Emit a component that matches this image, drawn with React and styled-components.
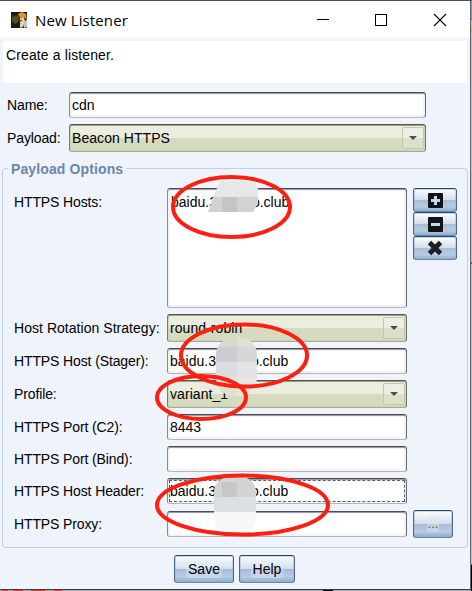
import React from "react";
import styled, { createGlobalStyle, css } from "styled-components";

const Global = createGlobalStyle`
  * { box-sizing: border-box; }
  body { margin: 0; overflow: hidden; font-family: "Liberation Sans", Arial, sans-serif; font-size: 14px; color: #000; }
`;

const Desktop = styled.div`
  position: relative;
  width: 472px;
  height: 591px;
  padding: 1px 2px 2px 0;
  background: linear-gradient(#4e5058 0 1px, #626569 1px 589px, #3b3b3e 589px 590px, #a9a9ab 590px);
`;
const DesktopSliver = styled.svg`
  position: absolute;
  left: 0;
  top: 0;
`;
const Window = styled.div`
  display: flex;
  flex-direction: column;
  width: 470px;
  height: 588px;
  background: #eff3fb;
`;
const TitleBar = styled.header`
  display: flex;
  align-items: center;
  height: 37px;
  padding-left: 11px;
  background: #fff;
`;
const Title = styled.h1`
  flex: 1;
  margin: 0 0 0 8px;
  font: 400 15px/20px "Open Sans", sans-serif;
  letter-spacing: .12px;
`;
const WindowControls = styled.div`
  display: flex;
  width: 176px;
`;
const ControlIcon = styled.svg`
  width: 58.5px;
  height: 14px;
`;
const Description = styled.p`
  height: 42px;
  margin: 3px 3px 9px;
  padding: 6px 3px;
  line-height: 16px;
  letter-spacing: .12px;
  background: #fff;
`;
const Form = styled.div`
  display: grid;
  grid-template-columns: ${(p) => p.$labels}px ${(p) => p.$fields}px auto;
  column-gap: 6px;
  row-gap: 6px;
  align-items: center;
  justify-content: start;
  padding-left: ${(p) => p.$indent}px;
`;
const Label = styled.label`
  grid-column: 1;
  align-self: ${(p) => (p.$top ? "start" : "center")};
  padding-top: ${(p) => (p.$top ? 6 : 0)}px;
  line-height: 16px;
  letter-spacing: ${(p) => (p.$wide ? 0.04 : -0.12)}px;
  white-space: nowrap;
`;
const frame = css`
  border: 1px solid #888a8c;
  border-top-color: #4c4d4e;
  border-right-color: #66686a;
  border-bottom-color: #b4b5b9;
  border-radius: 3px;
`;
const Field = styled.div`
  ${frame}
  grid-column: 2;
  display: flex;
  align-items: ${(p) => (p.$tall ? "flex-start" : "center")};
  height: ${(p) => (p.$tall ? 120 : 26)}px;
  padding: ${(p) => (p.$tall ? "5px 3px" : "0 2px")};
  line-height: 16px;
  background: #fff;
  box-shadow: inset 0 1px 0 #9b9c9d, inset 0 0 0 2px #f3f3f5;
  white-space: pre;
  ${(p) => p.$focused && css`
    outline: 1px dashed #48638c;
    outline-offset: -3px;
  `}
`;
const Combo = styled.div`
  ${frame}
  grid-column: 2;
  display: flex;
  align-items: center;
  justify-content: space-between;
  height: 28px;
  padding: 0 1px 0 2px;
  border-color: #55564c #70735f #a6ab91 #777b68;
  background: linear-gradient(#ebeddf 0 13px, #d6dbbf 13px);
  box-shadow: inset 0 1px 0 #9a9c8e, inset 0 0 0 1px #cdd2b8;
  line-height: 16px;
  letter-spacing: .06px;
`;
const Arrow = styled.span`
  display: grid;
  place-items: center;
  width: 22px;
  height: 22px;
  border: 1px solid #c4c9ad;
  border-radius: 2px;
  background: linear-gradient(#edefe5 0 10px, #dce0c9 10px);
`;
const Group = styled.fieldset`
  width: 466px;
  height: 388px;
  margin: 8px 0 0 2px;
  padding: 0;
  border: 1px solid #c0cfe1;
  border-radius: 4px;
`;
const Legend = styled.legend`
  height: 17px;
  margin-left: 5px;
  padding: 0 3px;
  font-weight: bold;
  line-height: 18px;
  letter-spacing: .12px;
  color: #6b87ab;
`;
const GroupBody = styled.div`
  padding-top: 11px;
`;
const Stack = styled.div`
  align-self: start;
`;
const Button = styled.button`
  display: flex;
  align-items: center;
  justify-content: center;
  width: ${(p) => p.$w}px;
  height: ${(p) => p.$h || 28}px;
  padding: 0;
  border: 1px solid #4a6a8d;
  border-top-color: #27486b;
  border-bottom-color: #668aad;
  border-radius: 3px;
  background: linear-gradient(#fdfefe, #d3deec 49%, #a7bdd8 51%, #b8cce2 80%, #8fadc9);
  box-shadow: inset 0 0 0 1px rgba(150, 180, 210, .5);
  font: 14px/16px "Liberation Sans", Arial, sans-serif;
  color: #000;
`;
const Ellipsis = styled.span`
  padding: 0 1px;
  font-size: 13px;
  color: #6b5a3c;
  background: rgba(222, 228, 234, .45);
`;
const Footer = styled.footer`
  display: flex;
  gap: 5px;
  padding: 7px 0 0 174px;
`;
const ButtonText = styled.span`
  padding: 1px 2px;
  border-radius: 3px;
  background: rgba(225, 235, 245, .4);
`;
const Annotations = styled.svg`
  position: absolute;
  left: 0;
  top: 0;
  pointer-events: none;
`;

function AppIcon() {
  return (
    <svg width="16" height="16" viewBox="0 0 16 16">
      <path fill="#17191a" d="M0 0h16v16H0z" />
      <path fill="#5a4a22" d="M1 3l2 2 2-2 3 2-1 5-3 2-3-3z" />
      <path fill="#e2922b" d="M7 2l4-2 4 2 1 6-3-3-4 1z" />
      <path fill="#efc9a8" d="M9 6l4-1 1 5-2 5-3 1v-5z" />
      <path fill="#935a32" d="M8 7l3 1v1l-2 1z" />
      <path fill="#b3c9cd" d="M13 9l3-1v7l-3 1z" />
    </svg>
  );
}

function SelectField({ children }) {
  return (
    <Combo>
      {children}
      <Arrow><svg width="8" height="4"><path d="M0 0h8L4 4z" fill="#4b4e48" /></svg></Arrow>
    </Combo>
  );
}

function SquareIcon({ plus }) {
  return (
    <svg width="15" height="15" viewBox="0 0 15 15">
      <rect width="15" height="15" rx="1" fill="#111416" />
      <path d={plus ? "M6 3h3v3h3v3H9v3H6V9H3V6h3z" : "M3 6h9v3H3z"} fill="#c4d8e8" />
    </svg>
  );
}

const ellipses = [
  [231.5, 207, 58.5, 30],
  [244, 355.5, 63, 31],
  [201.5, 397.5, 44.5, 21.5],
  [242.5, 505, 85.5, 29.5],
];

export default function App() {
  return (
    <Desktop>
      <Global />
      <DesktopSliver width="472" height="591">
        <path fill="#829ab5" d="M471 1h1v18h-1z" />
        <path fill="#bcc0c6" d="M471 20h1v242h-1zM471 264h1v300h-1z" />
        <path fill="#b8ad67" d="M471 30h1v2h-1z" />
        <path fill="#000" d="M471 565h1v26h-1zM323 590h10v1h-10z" />
        <path fill="#d93c32" d="M2 590h6v1H2zM13 590h10v1H13zM31 590h14v1H31zM54 590h8v1h-8z" />
      </DesktopSliver>
      <Window>
        <TitleBar>
          <AppIcon />
          <Title>New Listener</Title>
          <WindowControls>
            <ControlIcon viewBox="0 0 58.5 14"><path d="M23 6.5h12" stroke="#000" /></ControlIcon>
            <ControlIcon viewBox="0 0 58.5 14"><path d="M22 1.5h11v11H22z" fill="none" stroke="#000" shapeRendering="crispEdges" /></ControlIcon>
            <ControlIcon viewBox="0 0 58.5 14"><path d="M23 1l12 12M35 1L23 13" stroke="#000" strokeWidth="1.1" /></ControlIcon>
          </WindowControls>
        </TitleBar>
        <Description>Create a listener.</Description>
        <Form $labels={56} $fields={357} $indent={7}>
          <Label>Name:</Label>
          <Field>cdn</Field>
          <Label>Payload:</Label>
          <SelectField>Beacon HTTPS</SelectField>
        </Form>
        <Group>
          <Legend>Payload Options</Legend>
          <GroupBody>
            <Form $labels={147} $fields={240} $indent={11}>
              <Label $top>HTTPS Hosts:</Label>
              <Field $tall>baidu.3xxxxxo.club</Field>
              <Stack>
                <Button $w={44} $h={24} aria-label="Add"><SquareIcon plus /></Button>
                <Button $w={44} $h={24} aria-label="Remove"><SquareIcon /></Button>
                <Button $w={44} $h={24} aria-label="Clear">
                  <svg width="16" height="16"><path d="M2.5 2.5l11 11M13.5 2.5l-11 11" stroke="#1c2022" strokeWidth="4.8" /></svg>
                </Button>
              </Stack>
              <Label $wide>Host Rotation Strategy:</Label>
              <SelectField>round-robin</SelectField>
              <Label>HTTPS Host (Stager):</Label>
              <Field>baidu.3xxxxxo.club</Field>
              <Label>Profile:</Label>
              <SelectField>variant_1</SelectField>
              <Label>HTTPS Port (C2):</Label>
              <Field>8443</Field>
              <Label>HTTPS Port (Bind):</Label>
              <Field />
              <Label>HTTPS Host Header:</Label>
              <Field $focused>baidu.3xxxxxo.club</Field>
              <Label>HTTPS Proxy:</Label>
              <Field />
              <Button $w={40}><Ellipsis>...</Ellipsis></Button>
            </Form>
          </GroupBody>
        </Group>
        <Footer>
          <Button $w={60}><ButtonText>Save</ButtonText></Button>
          <Button $w={56}><ButtonText>Help</ButtonText></Button>
        </Footer>
      </Window>
      <Annotations width="472" height="591">
        <clipPath id="m1"><path d="M220 181h34l4 8v14l-5 9h-45l6-17z" /></clipPath>
        <g clipPath="url(#m1)">
          <path fill="#e6e7e9" d="M200 175h60v22h-60z" />
          <path fill="#d2d2d3" d="M200 197h60v16h-60z" />
          <path fill="#c5c5c6" d="M222 197h15v16h-15z" />
        </g>
        <clipPath id="m2"><rect x="216" y="337" width="41" height="59" rx="18" /></clipPath>
        <g clipPath="url(#m2)">
          <path fill="#d7dacb" d="M216 337h41v10h-41z" />
          <path fill="#cccdd0" d="M216 347h41v15h-41z" />
          <path fill="#dcdde0" d="M216 362h41v15h-41z" />
          <path fill="#e0e1dc" d="M216 377h41v8h-41z" />
          <path fill="#dfe2d0" d="M216 385h41v11h-41z" />
          <path fill="#fff" opacity=".18" d="M237 337h20v59h-20z" />
        </g>
        <clipPath id="m3"><rect x="214" y="477" width="42" height="56" rx="15" /></clipPath>
        <g clipPath="url(#m3)">
          <path fill="#d3d4d6" d="M214 477h42v20h-42z" />
          <path fill="#c7c7c9" d="M222 482h15v15h-15z" />
          <path fill="#dcdfe4" d="M214 497h42v15h-42z" />
          <path fill="#f7f8f9" d="M214 512h42v21h-42z" />
        </g>
        <g fill="none" stroke="#fc2010" strokeWidth="4">
          {ellipses.map(([cx, cy, rx, ry]) => <ellipse key={cy} cx={cx} cy={cy} rx={rx} ry={ry} />)}
        </g>
      </Annotations>
    </Desktop>
  );
}
